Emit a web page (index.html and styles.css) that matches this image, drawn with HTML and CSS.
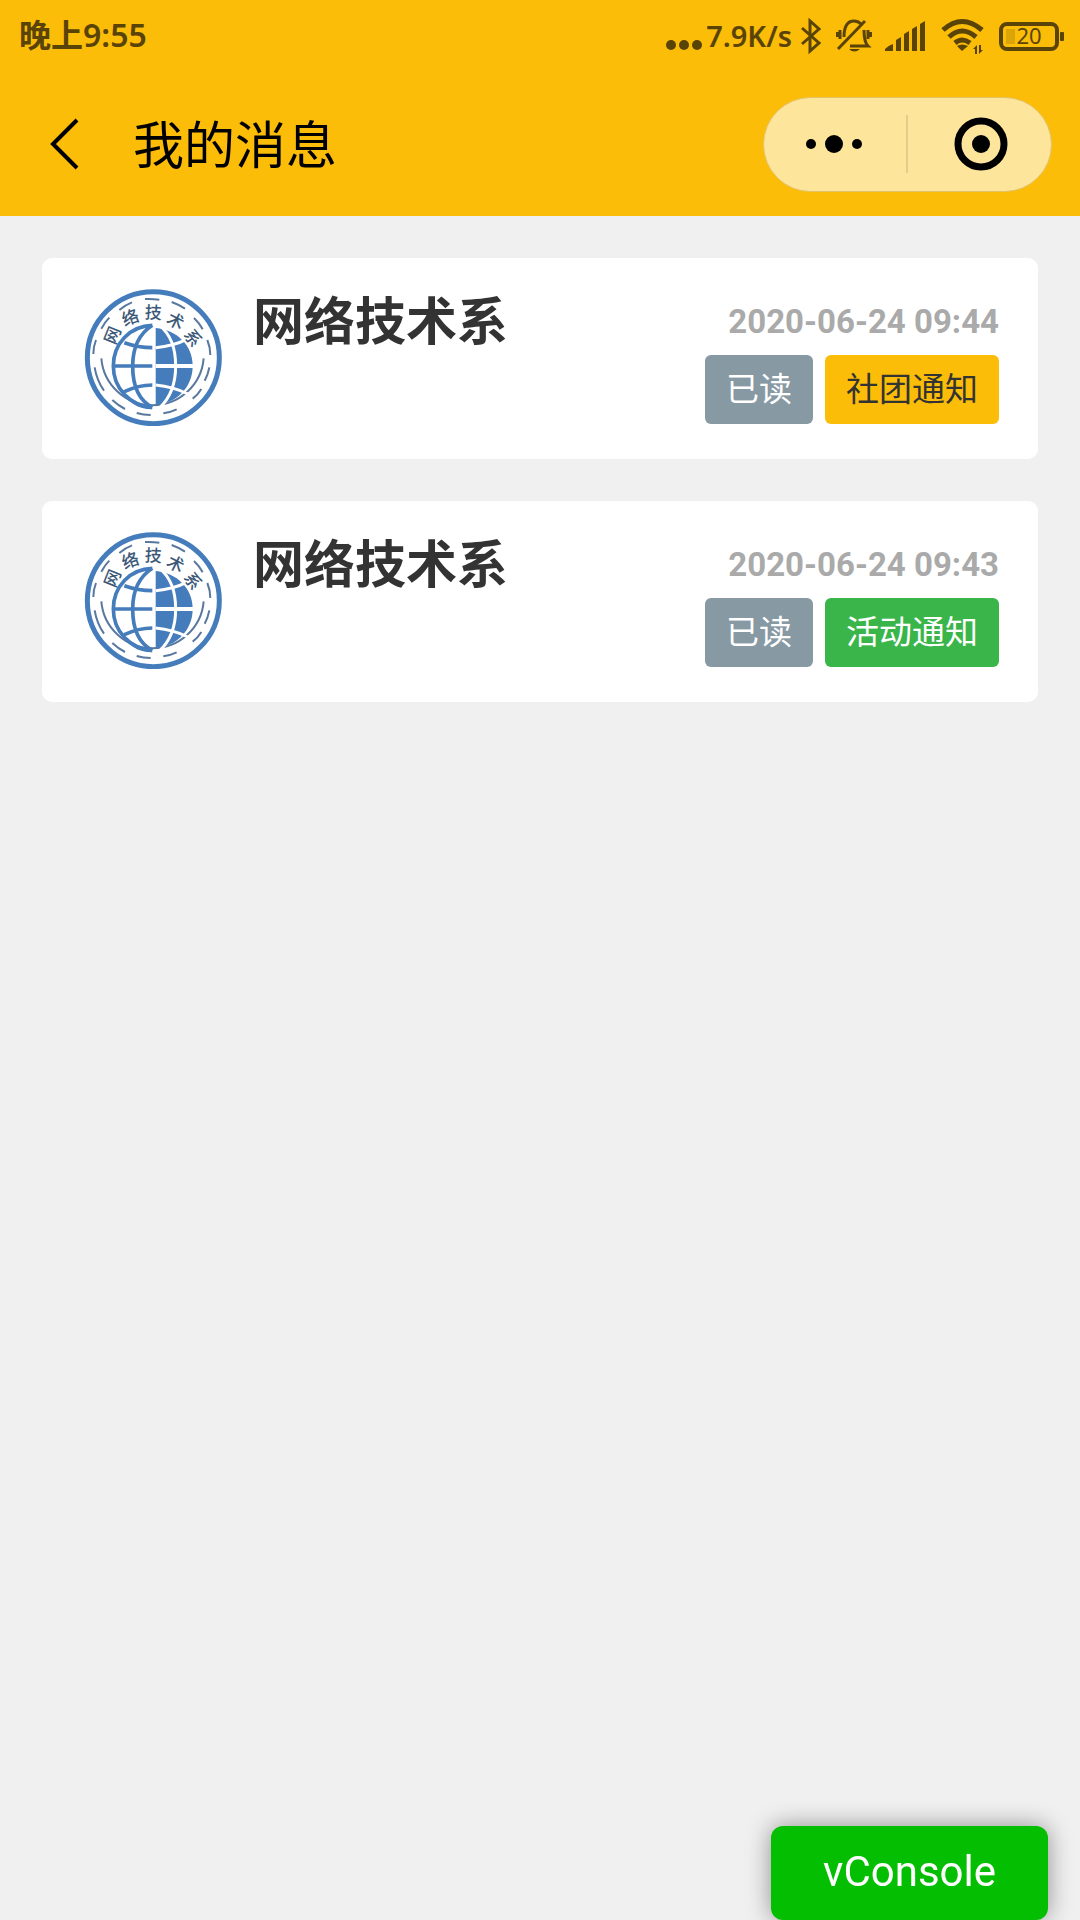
FILE: index.html
```html
<!DOCTYPE html>
<html lang="zh-CN">
<head>
<meta charset="utf-8">
<meta name="viewport" content="width=device-width, initial-scale=1">
<title>我的消息</title>
<link rel="stylesheet" href="styles.css">
</head>
<body>
<header class="header">
  <div class="status">
    <span class="status-time">晚上9:55</span>
    <div class="status-right">
      <svg class="icon-dots" viewBox="0 0 36 32" aria-hidden="true"><circle cx="5" cy="25" r="5"/><circle cx="18" cy="25" r="5"/><circle cx="31" cy="25" r="5"/></svg>
      <span class="status-speed">7.9K/s</span>
      <svg class="icon-bt" viewBox="0 0 22 36" aria-hidden="true"><path d="M2 10L19 25L10 33V3L19 11L2 26"/></svg>
      <svg class="icon-bell" viewBox="0 0 36 36" aria-hidden="true">
        <path d="M8 19C8 10 10 3 18 3Q22 3 25 6M28 12C28 20 29 25 32 28H14M29 3L2 31M4 12V21M1 14V19M32 12V21M35 14V19"/>
        <path class="solid" d="M13 31H24Q18 36 13 31Z"/>
      </svg>
      <svg class="icon-signal" viewBox="0 0 42 32" aria-hidden="true"><path d="M0 31V29Q4 25 8 24V31ZM11 31V20L16 17V31ZM19 31V14L24 11V31ZM27 31V9L32 6V31ZM35 31V4L40 1V31Z"/></svg>
      <svg class="icon-wifi" viewBox="0 0 44 36" aria-hidden="true">
        <path d="M2 12Q21 -5 41 12M8 19Q21 7 35 19M14 25Q21 19 29 25"/>
        <path class="solid" d="M16 28Q21 25 27 28L21 33ZM32 31L36 27V36H34V31ZM38 27H40V32H42L38 36Z"/>
      </svg>
      <svg class="icon-battery" viewBox="0 0 66 32" aria-hidden="true">
        <rect class="charge" x="8" y="9" width="9" height="15"/>
        <rect class="shell" x="3" y="4" width="56" height="25" rx="6"/>
        <rect class="solid" x="62" y="12" width="4" height="9" rx="1"/>
        <text x="31" y="24">20</text>
      </svg>
    </div>
  </div>
  <nav class="nav">
    <button class="back" type="button" aria-label="返回"><svg viewBox="0 0 30 52" aria-hidden="true"><path d="M27 2L3 26L27 50"/></svg></button>
    <h1 class="nav-title">我的消息</h1>
    <div class="capsule">
      <button class="capsule-btn capsule-more" type="button" aria-label="更多"><svg class="more" viewBox="0 0 56 18" aria-hidden="true"><circle cx="5" cy="9" r="5"/><circle cx="28" cy="9" r="9"/><circle cx="51" cy="9" r="5"/></svg></button>
      <span class="capsule-line"></span>
      <button class="capsule-btn capsule-close" type="button" aria-label="关闭"><svg class="target" viewBox="0 0 54 54" aria-hidden="true"><circle class="ring" cx="27" cy="27" r="23"/><circle cx="27" cy="27" r="9"/></svg></button>
    </div>
  </nav>
</header>

<main class="messages">
  <article class="card">
    <svg class="avatar" viewBox="162 114 414 414" role="img" aria-label="系徽">
      <circle class="logo-line" cx="370" cy="323" r="198" stroke-width="15"/>
      <path class="logo-dash" d="M345 147Q367 146 388 149M425 156Q447 164 465 176M492 204Q508 219 518 238M532 270Q541 292 541 315M538 352Q534 374 524 392M514 417Q504 434 488 446M440 478Q421 487 400 490M362 495Q340 495 320 489M285 477Q264 466 247 450M222 422Q200 390 194 352M190 312Q190 290 198 270M214 236Q224 217 238 203M268 180Q285 165 306 157"/>
      <path class="logo-dash" d="M214 325A154 153 0 0 0 521 325"/>
      <path class="logo-fill" d="M277 425C300 455 335 468 366 468V478C325 478 290 455 277 425Z"/>
      <path class="logo-line" stroke-width="11" d="M367 226C300 228 250 280 250 348S300 466 367 472M367 226C330 250 308 290 308 348S325 450 367 472M250 348H367M283 278Q325 293 367 293M283 425Q325 405 367 405"/>
      <path class="logo-fill" d="M377 234C440 240 488 285 488 348S440 460 377 465Z"/>
      <path class="logo-gap" stroke-width="9" d="M388 226C425 255 437 300 437 348S425 440 388 474M377 293Q430 289 474 266M377 405Q430 410 474 432"/>
      <path class="logo-gap" stroke-width="12" d="M377 348H492"/>
      <g class="logo-text">
        <text transform="translate(248 256) rotate(-68)" y="18">网</text>
        <text transform="translate(301 203) rotate(-20)" y="18">络</text>
        <text transform="translate(370 188) rotate(3)" y="18">技</text>
        <text transform="translate(437 213) rotate(27)" y="18">术</text>
        <text transform="translate(488 264) rotate(55)" y="18">系</text>
      </g>
    </svg>
    <h2 class="sender">网络技术系</h2>
    <div class="meta">
      <time class="date" datetime="2020-06-24T09:44">2020-06-24 09:44</time>
      <div class="tags"><span class="tag tag-read">已读</span><span class="tag tag-club">社团通知</span></div>
    </div>
  </article>
  <article class="card">
    <svg class="avatar" viewBox="162 114 414 414" role="img" aria-label="系徽">
      <circle class="logo-line" cx="370" cy="323" r="198" stroke-width="15"/>
      <path class="logo-dash" d="M345 147Q367 146 388 149M425 156Q447 164 465 176M492 204Q508 219 518 238M532 270Q541 292 541 315M538 352Q534 374 524 392M514 417Q504 434 488 446M440 478Q421 487 400 490M362 495Q340 495 320 489M285 477Q264 466 247 450M222 422Q200 390 194 352M190 312Q190 290 198 270M214 236Q224 217 238 203M268 180Q285 165 306 157"/>
      <path class="logo-dash" d="M214 325A154 153 0 0 0 521 325"/>
      <path class="logo-fill" d="M277 425C300 455 335 468 366 468V478C325 478 290 455 277 425Z"/>
      <path class="logo-line" stroke-width="11" d="M367 226C300 228 250 280 250 348S300 466 367 472M367 226C330 250 308 290 308 348S325 450 367 472M250 348H367M283 278Q325 293 367 293M283 425Q325 405 367 405"/>
      <path class="logo-fill" d="M377 234C440 240 488 285 488 348S440 460 377 465Z"/>
      <path class="logo-gap" stroke-width="9" d="M388 226C425 255 437 300 437 348S425 440 388 474M377 293Q430 289 474 266M377 405Q430 410 474 432"/>
      <path class="logo-gap" stroke-width="12" d="M377 348H492"/>
      <g class="logo-text">
        <text transform="translate(248 256) rotate(-68)" y="18">网</text>
        <text transform="translate(301 203) rotate(-20)" y="18">络</text>
        <text transform="translate(370 188) rotate(3)" y="18">技</text>
        <text transform="translate(437 213) rotate(27)" y="18">术</text>
        <text transform="translate(488 264) rotate(55)" y="18">系</text>
      </g>
    </svg>
    <h2 class="sender">网络技术系</h2>
    <div class="meta">
      <time class="date" datetime="2020-06-24T09:43">2020-06-24 09:43</time>
      <div class="tags"><span class="tag tag-read">已读</span><span class="tag tag-event">活动通知</span></div>
    </div>
  </article>
</main>

<button class="vconsole" type="button">vConsole</button>
</body>
</html>
```
FILE: styles.css
```css
* {
  box-sizing: border-box;
}

body {
  margin: 0;
  min-height: 100vh;
  background: #f0f0f0;
  color: #333;
  font-family: Roboto, "Noto Sans CJK SC", sans-serif;
}

button {
  border: 0;
  padding: 0;
  background: none;
  font: inherit;
  color: inherit;
}

svg {
  display: block;
  flex: none;
}

/* Header */
.header {
  background: #fbbd08;
}

.status {
  display: flex;
  align-items: center;
  justify-content: space-between;
  height: 72px;
  padding: 0 16px 0 19px;
  color: #5a4307;
  fill: #5a4307;
  font-family: "Noto Sans", "Noto Sans CJK SC", sans-serif;
  font-weight: 600;
  line-height: 40px;
}

.status-time {
  padding-bottom: 2px;
  font-size: 32px;
}

.status-right {
  display: flex;
  align-items: center;
}

.status-speed {
  margin: 0 8px 0 4px;
  font-size: 29px;
}

.icon-dots {
  width: 36px;
  height: 32px;
}

.icon-bt,
.icon-bell,
.icon-wifi {
  fill: none;
  stroke: #5a4307;
  stroke-width: 3;
}

.icon-bt {
  width: 22px;
  height: 36px;
}

.icon-bell {
  width: 36px;
  height: 36px;
  margin-left: 14px;
}

.icon-signal {
  width: 42px;
  height: 32px;
  margin-left: 13px;
}

.icon-wifi {
  width: 44px;
  height: 36px;
  margin-left: 14px;
}

.icon-wifi path {
  stroke-width: 5;
}

.icon-battery {
  width: 66px;
  height: 32px;
  margin-left: 13px;
}

.icon-battery .shell {
  fill: none;
  stroke: #5a4307;
  stroke-width: 4;
}

.icon-battery .charge {
  fill: #dca507;
}

.icon-battery text {
  font-size: 22px;
  font-weight: 400;
  text-anchor: middle;
}

.status .solid {
  fill: #5a4307;
  stroke: none;
}

.nav {
  display: flex;
  align-items: center;
  height: 144px;
  padding: 0 28px 0 50px;
  color: #000;
}

.back svg {
  width: 30px;
  height: 52px;
  fill: none;
  stroke: #000;
  stroke-width: 4;
}

.nav-title {
  flex: 1;
  margin: 0;
  padding: 6px 0 0 53px;
  font-size: 51px;
  font-weight: 400;
  line-height: 72px;
}

.capsule {
  display: flex;
  align-items: center;
  width: 289px;
  height: 95px;
  border: 1px solid #e3c268;
  border-radius: 48px;
  background: #fde59c;
}

.capsule-btn {
  display: flex;
  flex: 1;
  align-items: center;
  justify-content: center;
  height: 100%;
}

.capsule-more {
  padding-right: 2px;
}

.capsule-close {
  padding-left: 4px;
}

.capsule-line {
  width: 2px;
  height: 58px;
  background: #e4cd8b;
}

.more {
  width: 56px;
  height: 18px;
}

.target {
  width: 54px;
  height: 54px;
}

.target .ring {
  fill: none;
  stroke: #000;
  stroke-width: 7;
}

/* Message list */
.messages {
  display: flex;
  flex-direction: column;
  gap: 42px;
  padding: 42px;
}

.card {
  display: flex;
  align-items: flex-start;
  padding: 30px 39px 33px 42px;
  border-radius: 10px;
  background: #fff;
}

.avatar {
  width: 138px;
  height: 138px;
}

.logo-line {
  fill: none;
  stroke: #457cbb;
}

.logo-fill {
  fill: #457cbb;
}

.logo-gap {
  fill: none;
  stroke: #fff;
}

.logo-dash {
  fill: none;
  stroke: #58789f;
  stroke-width: 6;
}

.logo-text {
  fill: #3c5878;
  font-family: "Noto Sans CJK SC", sans-serif;
  font-size: 51px;
  font-weight: 500;
  text-anchor: middle;
}

.sender {
  flex: 1;
  margin: 0 0 0 31px;
  font-size: 51px;
  font-weight: 700;
  line-height: 69px;
}

.meta {
  display: flex;
  flex-direction: column;
  align-items: flex-end;
}

.date {
  padding-top: 1px;
  color: #aaa;
  font-size: 33px;
  font-weight: 700;
  line-height: 66px;
}

.tags {
  display: flex;
  gap: 12px;
}

.tag {
  padding: 0 21px;
  border-radius: 6px;
  color: #fff;
  font-size: 33px;
  line-height: 69px;
}

.tag-read {
  background: #8799a3;
}

.tag-club {
  background: #fbbd08;
  color: #333;
}

.tag-event {
  background: #39b54a;
}

/* Debug console switch */
.vconsole {
  position: fixed;
  right: 32px;
  bottom: 0;
  padding: 21px 52px 23px;
  border-radius: 12px;
  background: #04be02;
  box-shadow: 0 0 24px rgba(0, 0, 0, 0.4);
  color: #fff;
  font-size: 42px;
  line-height: 50px;
}
```
